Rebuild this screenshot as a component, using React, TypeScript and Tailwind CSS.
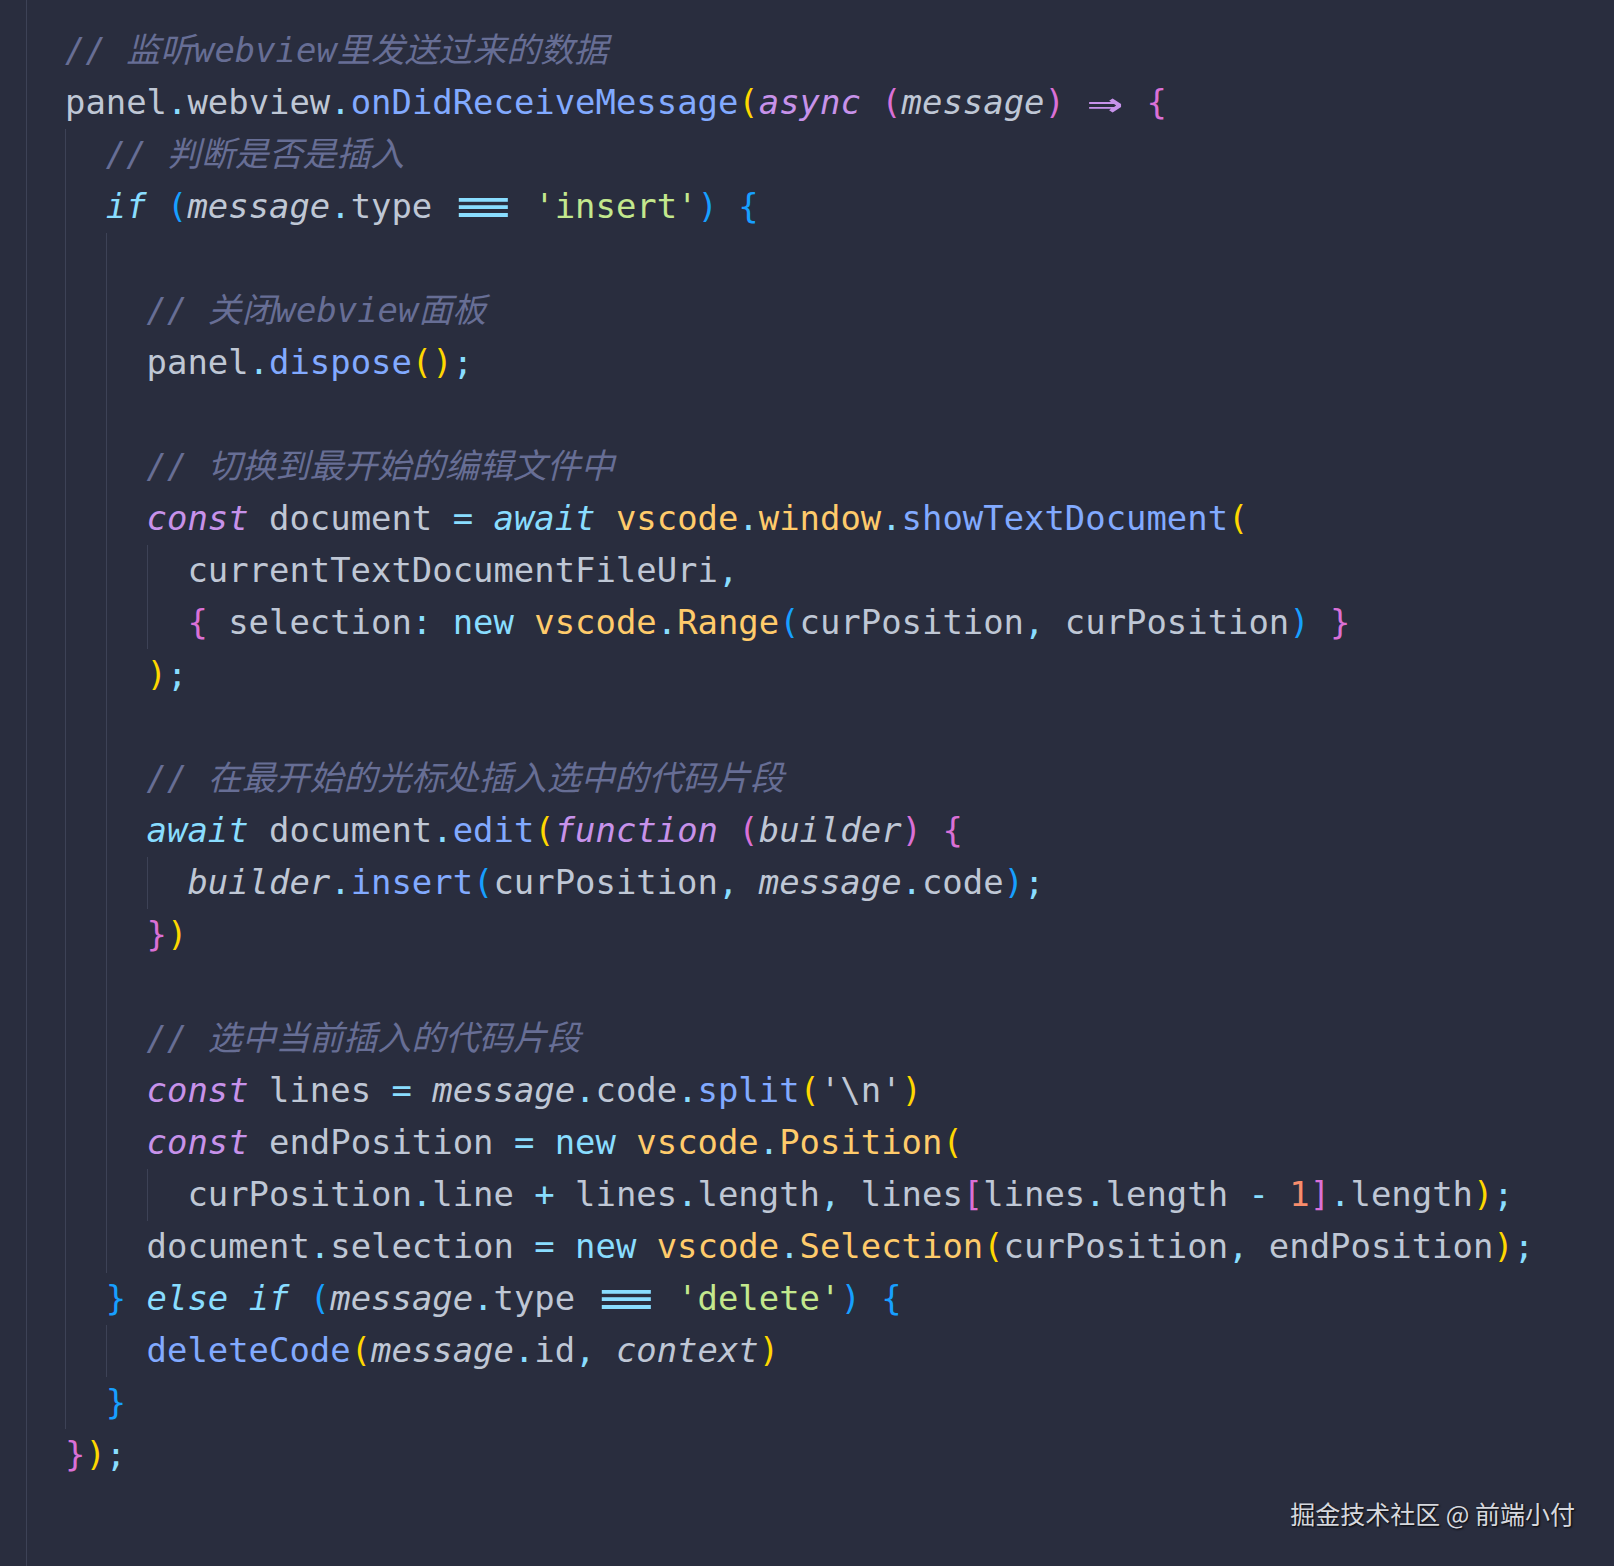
import React from "react";

type Tok = [string, string];
type Line = { g: number; toks: Tok[] };

const T = "text-[#bfc7d5]";
const CM = "text-[#676e95] italic";
const P = "text-[#89ddff]";
const FN = "text-[#82aaff]";
const KW = "text-[#c792ea] italic";
const KC = "text-[#89ddff] italic";
const NW = "text-[#89ddff]";
const Y = "text-[#ffcb6b]";
const S = "text-[#c3e88d]";
const N = "text-[#f78c6c]";
const IT = "text-[#bfc7d5] italic";
const B1 = "text-[#ffd700]";
const B2 = "text-[#da70d6]";
const B3 = "text-[#179fff]";
const EQ = "EQ";
const ARROW = "ARROW";

const lines: Line[] = [
  { g: 0, toks: [[CM, "// 监听webview里发送过来的数据"]] },
  {
    g: 0,
    toks: [
      [T, "panel"], [P, "."], [T, "webview"], [P, "."], [FN, "onDidReceiveMessage"], [B1, "("],
      [KW, "async"], [T, " "], [B2, "("], [IT, "message"], [B2, ")"], [T, " "], [ARROW, ""], [T, " "], [B2, "{"],
    ],
  },
  { g: 1, toks: [[CM, "// 判断是否是插入"]] },
  {
    g: 1,
    toks: [
      [KC, "if"], [T, " "], [B3, "("], [IT, "message"], [P, "."], [T, "type"], [T, " "], [EQ, ""], [T, " "],
      [S, "'insert'"], [B3, ")"], [T, " "], [B3, "{"],
    ],
  },
  { g: 2, toks: [] },
  { g: 2, toks: [[CM, "// 关闭webview面板"]] },
  { g: 2, toks: [[T, "panel"], [P, "."], [FN, "dispose"], [B1, "()"], [P, ";"]] },
  { g: 2, toks: [] },
  { g: 2, toks: [[CM, "// 切换到最开始的编辑文件中"]] },
  {
    g: 2,
    toks: [
      [KW, "const"], [T, " document "], [P, "="], [T, " "], [KC, "await"], [T, " "], [Y, "vscode"], [P, "."],
      [Y, "window"], [P, "."], [FN, "showTextDocument"], [B1, "("],
    ],
  },
  { g: 3, toks: [[T, "currentTextDocumentFileUri"], [P, ","]] },
  {
    g: 3,
    toks: [
      [B2, "{"], [T, " selection"], [P, ":"], [T, " "], [NW, "new"], [T, " "], [Y, "vscode"], [P, "."], [Y, "Range"],
      [B3, "("], [T, "curPosition"], [P, ","], [T, " curPosition"], [B3, ")"], [T, " "], [B2, "}"],
    ],
  },
  { g: 2, toks: [[B1, ")"], [P, ";"]] },
  { g: 2, toks: [] },
  { g: 2, toks: [[CM, "// 在最开始的光标处插入选中的代码片段"]] },
  {
    g: 2,
    toks: [
      [KC, "await"], [T, " document"], [P, "."], [FN, "edit"], [B1, "("], [KW, "function"], [T, " "], [B2, "("],
      [IT, "builder"], [B2, ")"], [T, " "], [B2, "{"],
    ],
  },
  {
    g: 3,
    toks: [
      [IT, "builder"], [P, "."], [FN, "insert"], [B3, "("], [T, "curPosition"], [P, ","], [T, " "], [IT, "message"],
      [P, "."], [T, "code"], [B3, ")"], [P, ";"],
    ],
  },
  { g: 2, toks: [[B2, "}"], [B1, ")"]] },
  { g: 2, toks: [] },
  { g: 2, toks: [[CM, "// 选中当前插入的代码片段"]] },
  {
    g: 2,
    toks: [
      [KW, "const"], [T, " lines "], [P, "="], [T, " "], [IT, "message"], [P, "."], [T, "code"], [P, "."],
      [FN, "split"], [B1, "("], [T, "'\\n'"], [B1, ")"],
    ],
  },
  {
    g: 2,
    toks: [
      [KW, "const"], [T, " endPosition "], [P, "="], [T, " "], [NW, "new"], [T, " "], [Y, "vscode"], [P, "."],
      [Y, "Position"], [B1, "("],
    ],
  },
  {
    g: 3,
    toks: [
      [T, "curPosition"], [P, "."], [T, "line "], [P, "+"], [T, " lines"], [P, "."], [T, "length"], [P, ","],
      [T, " lines"], [B2, "["], [T, "lines"], [P, "."], [T, "length "], [P, "-"], [T, " "], [N, "1"], [B2, "]"],
      [P, "."], [T, "length"], [B1, ")"], [P, ";"],
    ],
  },
  {
    g: 2,
    toks: [
      [T, "document"], [P, "."], [T, "selection "], [P, "="], [T, " "], [NW, "new"], [T, " "], [Y, "vscode"],
      [P, "."], [Y, "Selection"], [B1, "("], [T, "curPosition"], [P, ","], [T, " endPosition"], [B1, ")"], [P, ";"],
    ],
  },
  {
    g: 1,
    toks: [
      [B3, "}"], [T, " "], [KC, "else"], [T, " "], [KC, "if"], [T, " "], [B3, "("], [IT, "message"], [P, "."],
      [T, "type"], [T, " "], [EQ, ""], [T, " "], [S, "'delete'"], [B3, ")"], [T, " "], [B3, "{"],
    ],
  },
  {
    g: 2,
    toks: [
      [FN, "deleteCode"], [B1, "("], [IT, "message"], [P, "."], [T, "id"], [P, ","], [T, " "], [IT, "context"],
      [B1, ")"],
    ],
  },
  { g: 1, toks: [[B3, "}"]] },
  { g: 0, toks: [[B2, "}"], [B1, ")"], [P, ";"]] },
];

function Token({ t }: { t: Tok }) {
  if (t[0] === EQ) {
    return (
      <span className="inline-block w-[3ch] text-center text-[#89ddff]">
        <span className="inline-block scale-x-[2.8] font-bold">≡</span>
      </span>
    );
  }
  if (t[0] === ARROW) {
    return (
      <span className="inline-block w-[2ch] text-center text-[#c792ea]">
        <span className="inline-block scale-x-[1.75] scale-y-[1.15] font-bold">⇒</span>
      </span>
    );
  }
  return <span className={t[0]}>{t[1]}</span>;
}

export default function App() {
  return (
    <div className="relative h-[1566px] w-full overflow-hidden bg-[#292d3e] font-['DejaVu_Sans_Mono','Noto_Sans_CJK_SC',monospace]">
      <div className="ml-[26px] h-full border-l border-[#3d4256] pl-[38px] pt-[25px]">
        {lines.map((ln, i) => (
          <div key={i} className="flex h-[52px] items-stretch whitespace-pre text-[33.9px] leading-[52px]">
            {Array.from({ length: ln.g }).map((_, k) => (
              <span key={k} className="inline-block w-[2ch] shrink-0 border-l border-[#3d4256]" />
            ))}
            <span className="whitespace-pre">
              {ln.toks.map((t, j) => (
                <Token key={j} t={t} />
              ))}
            </span>
          </div>
        ))}
      </div>
      <div className="absolute bottom-[40px] right-[39px] font-['Noto_Sans_CJK_SC',sans-serif] text-[25px] leading-[25px] text-[#d6d8de] [text-shadow:1px_1px_2px_rgba(0,0,0,0.9)]">
        掘金技术社区 @ 前端小付
      </div>
    </div>
  );
}
